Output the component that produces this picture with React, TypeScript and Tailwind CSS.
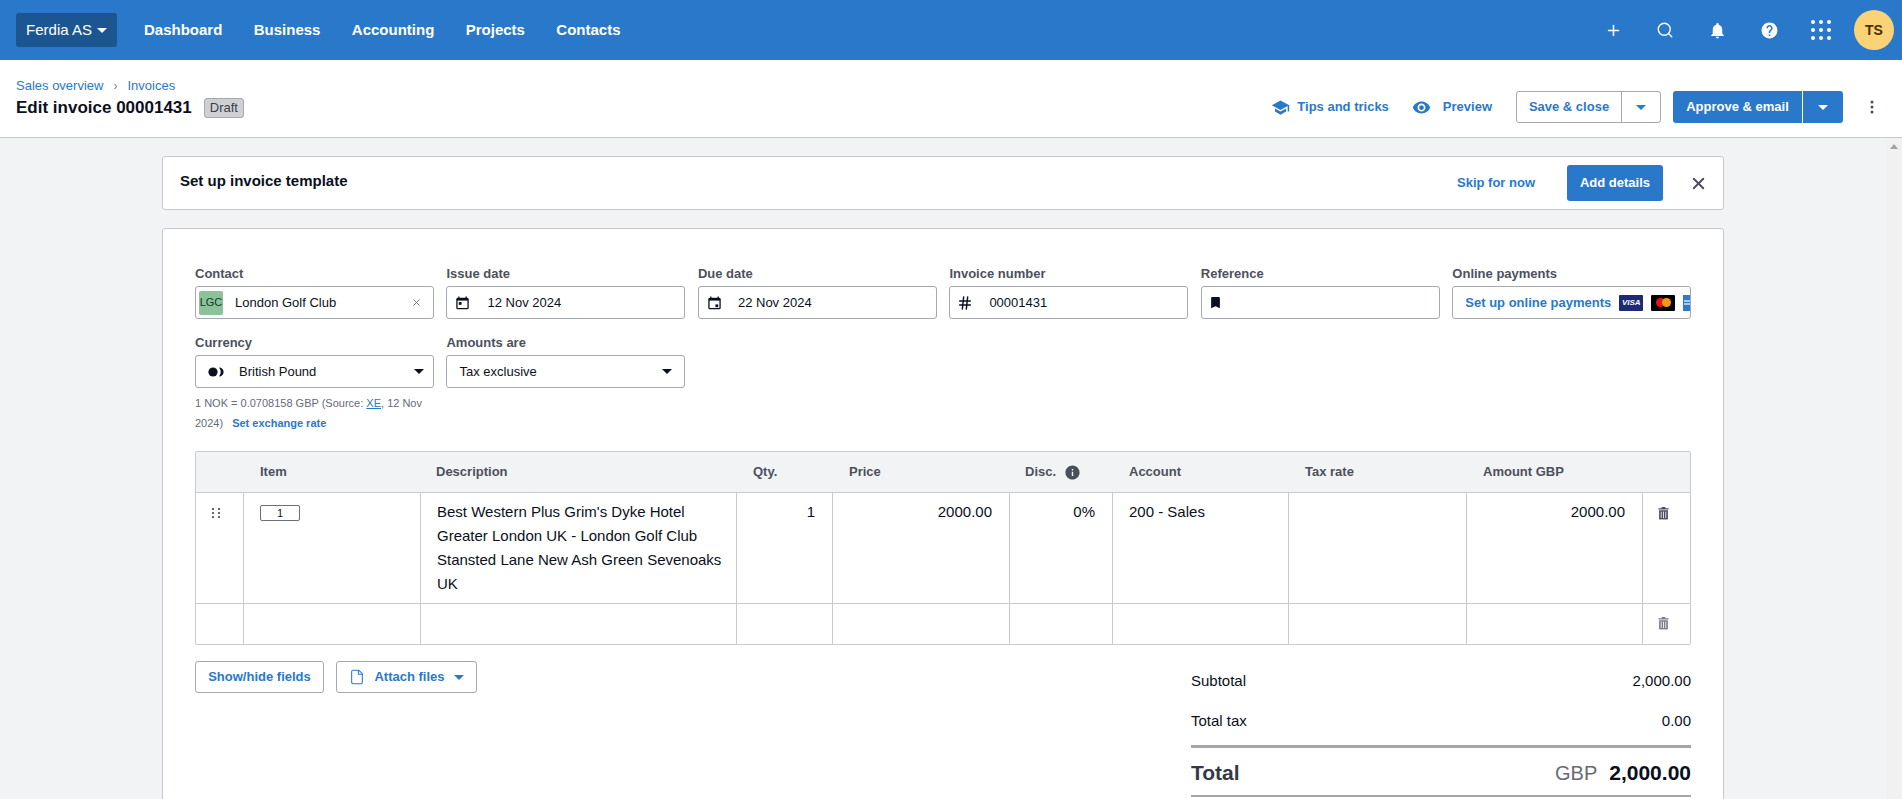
import React from 'react';
import { Plus, Search, X, Hash, File } from 'lucide-react';
import { MdNotifications, MdHelp, MdSchool, MdVisibility, MdBookmark, MdInfo } from 'react-icons/md';

const columns = 'grid-cols-[47px_177px_316px_96px_177px_103px_176px_178px_176px_1fr]';
const navItems = ['Dashboard', 'Business', 'Accounting', 'Projects', 'Contacts'];

function Caret({ className = '' }: { className?: string }) {
  return (
    <svg viewBox="0 0 10 5" className={`w-[10px] h-[5px] fill-current ${className}`}>
      <polygon points="0,0 10,0 5,5" />
    </svg>
  );
}

function Calendar({ due }: { due?: boolean }) {
  return (
    <svg viewBox="0 0 14 14" className="w-[13px] h-[14px] text-[#0b1020]">
      <path d="M3 0v2M11 0v2" stroke="currentColor" strokeWidth="1.4" />
      <rect x="1" y="2" width="12" height="11" rx="1" fill="none" stroke="currentColor" strokeWidth="1.4" />
      <rect x="1" y="2" width="12" height="2.4" fill="currentColor" />
      {due ? <rect x="8" y="8.5" width="3" height="3" fill="currentColor" /> : <rect x="3" y="6" width="3" height="3" fill="currentColor" />}
    </svg>
  );
}

function Trash({ light }: { light?: boolean }) {
  return (
    <svg viewBox="0 0 12 14" className={`w-[11px] h-[14px] ${light ? 'text-[#7d808a]' : 'text-[#4b4f5c]'}`}>
      <path d="M4 0.5h4v1.3h3.6v1.4H0.4V1.8H4z" fill="currentColor" />
      <path d="M1.2 4h9.6v10H1.2z" fill="currentColor" />
      <path d="M3.5 5.5v7M6 5.5v7M8.5 5.5v7" stroke="#fff" strokeWidth="0.9" />
    </svg>
  );
}

function DragDots() {
  return (
    <svg viewBox="0 0 8 10" className="w-[8px] h-[10px] fill-[#4b4f5c]">
      {[1, 5, 9].flatMap((y) => [1, 7].map((x) => <circle key={`${x}-${y}`} cx={x} cy={y} r="1.1" />))}
    </svg>
  );
}

function Field({ label, children, note }: { label: string; children: React.ReactNode; note?: React.ReactNode }) {
  return (
    <div>
      <div className="h-[20px] mb-[2px] text-[13px] leading-[20px] font-bold text-[#4d505c] whitespace-nowrap">{label}</div>
      <div className="h-[33px] bg-white border border-[#a6a8b1] rounded-[3px] flex items-center text-[13px] text-[#0b1020] overflow-hidden">
        {children}
      </div>
      {note}
    </div>
  );
}

function Row({ children, className = '' }: { children: React.ReactNode; className?: string }) {
  return <div className={`grid ${columns} ${className}`}>{children}</div>;
}

function Cell({ children, right }: { children?: React.ReactNode; right?: boolean }) {
  return (
    <div className={`border-l border-[#c8cad0] pt-[7px] text-[15px] leading-[24px] text-[#0b1020] ${right ? 'pl-[16px] pr-[17px] text-right' : 'pl-[16px] pr-[12px]'}`}>
      {children}
    </div>
  );
}

function SplitButton({ label, primary }: { label: string; primary?: boolean }) {
  if (primary) {
    return (
      <div className="flex h-[32px] rounded-[3px] bg-[#2a78ca] text-white text-[13px] font-bold">
        <span className="w-[129px] flex items-center justify-center">{label}</span>
        <span className="w-[41px] border-l border-white flex items-center justify-center"><Caret /></span>
      </div>
    );
  }
  return (
    <div className="flex h-[32px] rounded-[3px] bg-white border border-[#a6a8b1] text-[#2a78ca] text-[13px] font-bold">
      <span className="w-[104px] flex items-center justify-center">{label}</span>
      <span className="w-[39px] border-l border-[#a6a8b1] flex items-center justify-center"><Caret /></span>
    </div>
  );
}

export default function App() {
  return (
    <div className="h-screen overflow-hidden flex flex-col font-['Liberation_Sans',Arial,sans-serif] bg-[#f2f3f5]">
      {/* top nav */}
      <div className="h-[60px] shrink-0 bg-[#2a78ca] flex items-center pl-[16px] pr-[8px] text-white">
        <div className="w-[101px] h-[34px] rounded-[3px] bg-[#1c5692] flex items-center justify-center gap-[5px] text-[15px]">
          Ferdia AS <Caret />
        </div>
        <nav className="ml-[27px] flex gap-[31.4px] text-[15px] font-bold">
          {navItems.map((item) => (
            <span key={item}>{item}</span>
          ))}
        </nav>
        <div className="ml-auto flex items-center">
          <span className="w-[52px] flex justify-center"><Plus size={17} strokeWidth={2.2} /></span>
          <span className="w-[52px] flex justify-center"><Search size={18} strokeWidth={1.8} /></span>
          <span className="w-[52px] flex justify-center"><MdNotifications size={19} /></span>
          <span className="w-[52px] flex justify-center"><MdHelp size={19} /></span>
          <span className="w-[52px] flex justify-center">
            <span className="grid grid-cols-3 gap-[4px]">
              {Array.from({ length: 9 }).map((_, i) => (
                <span key={i} className="w-[4px] h-[4px] rounded-full bg-white" />
              ))}
            </span>
          </span>
          <span className="ml-[7px] w-[40px] h-[40px] rounded-full bg-[#fad377] text-[#4e2c04] text-[14px] font-bold flex items-center justify-center">TS</span>
        </div>
      </div>

      {/* page header */}
      <div className="h-[78px] shrink-0 bg-white border-b border-[#c6c8ce] flex items-center pl-[16px] pr-[28px]">
        <div className="-mt-[2px]">
          <div className="flex items-center text-[13px] leading-[18px] text-[#2a78ca]">
            Sales overview <span className="mx-[10px] text-[#7d808a] text-[12px]">›</span> Invoices
          </div>
          <div className="mt-[2px] flex items-center">
            <span className="text-[17px] leading-[22px] font-bold text-[#0b1020]">Edit invoice 00001431</span>
            <span className="ml-[12px] h-[20px] px-[5px] rounded-[3px] bg-[#cfd0d4] border border-[#a6a8b1] text-[#3c3f4a] text-[13px] leading-[18px]">Draft</span>
          </div>
        </div>
        <div className="ml-auto pt-[17px] flex items-center text-[#2a78ca] text-[13px] font-bold">
          <MdSchool size={19} />
          <span className="ml-[7px]">Tips and tricks</span>
          <MdVisibility size={19} className="ml-[23px]" />
          <span className="ml-[12px] mr-[24px]">Preview</span>
          <SplitButton label="Save & close" />
          <span className="w-[12px]" />
          <SplitButton label="Approve & email" primary />
          <svg viewBox="0 0 4 14" className="ml-[27px] w-[4px] h-[14px] fill-[#4b4f5c]">
            <circle cx="2" cy="2" r="1.5" /><circle cx="2" cy="7" r="1.5" /><circle cx="2" cy="12" r="1.5" />
          </svg>
        </div>
      </div>

      <div className="flex-1 flex overflow-hidden">
        <main className="flex-1 overflow-hidden pt-[18px]">
          {/* template banner */}
          <div className="mx-auto w-[1562px] h-[54px] bg-white border border-[#c6c8ce] rounded-[3px] flex items-center pl-[17px] pr-[15px]">
            <span className="-mt-[3px] text-[15px] font-bold text-[#0b1020]">Set up invoice template</span>
            <span className="ml-auto text-[13px] font-bold text-[#2a78ca]">Skip for now</span>
            <span className="ml-[32px] w-[96px] h-[36px] rounded-[3px] bg-[#2a78ca] text-white text-[13px] font-bold flex items-center justify-center">Add details</span>
            <X size={19} strokeWidth={2.4} className="ml-[26px] text-[#4b4f5c]" />
          </div>

          {/* invoice card */}
          <div className="mx-auto mt-[18px] w-[1562px] bg-white border border-[#c6c8ce] rounded-[3px] pt-[35px] px-[32px] pb-[40px]">
            <div className="grid grid-cols-6 gap-x-[12.8px] gap-y-[14px]">
              <Field label="Contact">
                <span className="ml-[3px] w-[24px] h-[24px] rounded-[2px] bg-[#8cc29b] text-[#0f3a20] text-[11px] flex items-center justify-center">LGC</span>
                <span className="ml-[12px]">London Golf Club</span>
                <X size={11} className="ml-auto mr-[11px] text-[#6b6e78]" />
              </Field>
              <Field label="Issue date">
                <span className="ml-[9px] flex"><Calendar /></span>
                <span className="ml-[18px]">12 Nov 2024</span>
              </Field>
              <Field label="Due date">
                <span className="ml-[9px] flex"><Calendar due /></span>
                <span className="ml-[17px]">22 Nov 2024</span>
              </Field>
              <Field label="Invoice number">
                <Hash size={16} strokeWidth={2.2} className="ml-[7px] text-[#0b1020]" />
                <span className="ml-[16px]">00001431</span>
              </Field>
              <Field label="Reference">
                <MdBookmark size={15} className="ml-[6px] text-[#0b1020]" />
              </Field>
              <Field label="Online payments">
                <span className="ml-[12px] font-bold text-[#2a78ca] whitespace-nowrap">Set up online payments</span>
                <span className="ml-[8px] shrink-0 w-[24px] h-[16px] rounded-[1px] bg-[#1e2a78] text-white text-[8px] italic font-bold flex items-center justify-center">VISA</span>
                <span className="ml-[8px] shrink-0 w-[24px] h-[16px] rounded-[1px] bg-black flex items-center justify-center">
                  <span className="w-[9px] h-[9px] rounded-full bg-[#e8141c]" />
                  <span className="-ml-[3px] w-[9px] h-[9px] rounded-full bg-[#f59a10]" />
                </span>
                <span className="ml-[8px] shrink-0 w-[24px] h-[16px] bg-[#2d7ad0] flex flex-col justify-center gap-[1px] pl-[1px]">
                  <span className="w-[6px] h-[2px] bg-[#a9cdf2]" />
                  <span className="w-[6px] h-[2px] bg-[#a9cdf2]" />
                </span>
              </Field>
              <Field
                label="Currency"
                note={
                  <div className="mt-[5px] text-[11px] leading-[20px] text-[#666a75]">
                    1 NOK = 0.0708158 GBP (Source: <span className="text-[#2a78ca] underline">XE</span>, 12 Nov 2024)
                    <span className="ml-[9px] font-bold text-[#2a78ca]">Set exchange rate</span>
                  </div>
                }
              >
                <svg viewBox="0 0 16 10" className="ml-[12px] w-[16px] h-[10px] fill-[#0b1020]">
                  <circle cx="5" cy="5" r="4.6" />
                  <path d="M11 0.4a4.6 4.6 0 0 1 0 9.2a7 7 0 0 0 0-9.2z" />
                </svg>
                <span className="ml-[15px]">British Pound</span>
                <Caret className="ml-auto mr-[9px] text-[#0b1020]" />
              </Field>
              <Field label="Amounts are">
                <span className="ml-[12px]">Tax exclusive</span>
                <Caret className="ml-auto mr-[12px] text-[#0b1020]" />
              </Field>
            </div>

            {/* line items */}
            <div className="mt-[18px] border border-[#c8cad0] rounded-[2px]">
              <Row className="h-[41px] bg-[#f2f3f5] border-b border-[#c8cad0] text-[13px] font-bold text-[#4d505c] items-center">
                <span />
                <span className="pl-[17px]">Item</span>
                <span className="pl-[16px]">Description</span>
                <span className="pl-[17px]">Qty.</span>
                <span className="pl-[17px]">Price</span>
                <span className="pl-[16px] flex items-center gap-[8px]">Disc. <MdInfo size={17} className="text-[#4b4f5c]" /></span>
                <span className="pl-[17px]">Account</span>
                <span className="pl-[17px]">Tax rate</span>
                <span className="pl-[17px]">Amount GBP</span>
                <span />
              </Row>
              <Row className="h-[111px] border-b border-[#c8cad0]">
                <div className="flex justify-center pt-[15px] pr-[7px]"><DragDots /></div>
                <Cell>
                  <span className="mt-[5px] block w-[40px] h-[16px] border border-[#6b6e78] rounded-[2px] text-[11px] leading-[14px] text-center">1</span>
                </Cell>
                <Cell>Best Western Plus Grim's Dyke Hotel Greater London UK - London Golf Club Stansted Lane New Ash Green Sevenoaks UK</Cell>
                <Cell right>1</Cell>
                <Cell right>2000.00</Cell>
                <Cell right>0%</Cell>
                <Cell>200 - Sales</Cell>
                <Cell />
                <Cell right>2000.00</Cell>
                <div className="border-l border-[#c8cad0] flex justify-center pt-[13px] pr-[6px]"><Trash /></div>
              </Row>
              <Row className="h-[40px]">
                <div />
                <Cell />
                <Cell />
                <Cell />
                <Cell />
                <Cell />
                <Cell />
                <Cell />
                <Cell />
                <div className="border-l border-[#c8cad0] flex justify-center pt-[12px] pr-[6px]"><Trash light /></div>
              </Row>
            </div>

            <div className="mt-[16px] flex items-start justify-between">
              <div className="flex gap-[12px] text-[13px] font-bold text-[#2a78ca]">
                <span className="h-[32px] w-[129px] bg-white border border-[#a6a8b1] rounded-[3px] flex items-center justify-center">Show/hide fields</span>
                <span className="h-[32px] w-[141px] bg-white border border-[#a6a8b1] rounded-[3px] flex items-center justify-center">
                  <File size={16} strokeWidth={1.6} className="mr-[9px]" />
                  Attach files
                  <Caret className="ml-[9px]" />
                </span>
              </div>
              <div className="w-[500px] pt-[8px] text-[15px] text-[#0b1020]">
                <div className="flex justify-between leading-[24px]"><span>Subtotal</span><span>2,000.00</span></div>
                <div className="mt-[16px] flex justify-between leading-[24px]"><span>Total tax</span><span>0.00</span></div>
                <div className="mt-[12px] border-t-[3px] border-[#a2a5ad] flex justify-between items-center h-[50px] pt-[2px]">
                  <span className="text-[21px] font-bold text-[#353945]">Total</span>
                  <span className="text-[21px]">
                    <span className="text-[20px] text-[#666a75] mr-[12px]">GBP</span>
                    <span className="font-bold">2,000.00</span>
                  </span>
                </div>
                <div className="border-t-[2px] border-[#a2a5ad]" />
              </div>
            </div>
          </div>
        </main>
        {/* scrollbar */}
        <div className="w-[16px] shrink-0 bg-[#f1f1f1] flex justify-center pt-[6px]">
          <svg viewBox="0 0 8 5" className="w-[8px] h-[5px] fill-[#a3a3a3]"><polygon points="4,0 8,5 0,5" /></svg>
        </div>
      </div>
    </div>
  );
}
